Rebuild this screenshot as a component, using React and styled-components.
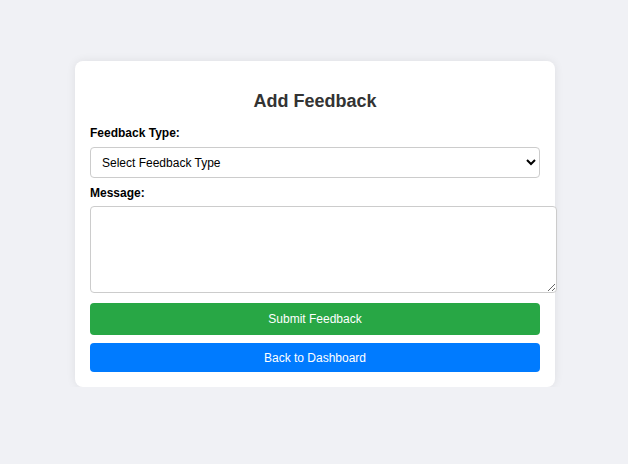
import React from "react";
import styled, { createGlobalStyle } from "styled-components";

const GlobalStyle = createGlobalStyle`
  body {
    margin: 0;
    background: #f0f1f5;
    font-family: "Liberation Sans", Arial, sans-serif;
  }
`;

const Page = styled.div`
  display: flex;
  justify-content: center;
  padding: 61px 0 0 2px;
`;

const Card = styled.div`
  width: 450px;
  padding: 15px;
  background: #fff;
  border-radius: 8px;
  box-shadow: 0 0 10px rgba(0, 0, 0, 0.08);
`;

const Title = styled.h2`
  margin: 15px 0 13px;
  text-align: center;
  font-size: 18px;
  line-height: 21px;
  color: #333;
`;

const Label = styled.label`
  display: block;
  font-size: 12px;
  font-weight: bold;
  line-height: 16px;
  color: #000;
  margin-bottom: ${(p) => p.$gap || 6}px;
`;

const Select = styled.select`
  display: block;
  width: 100%;
  height: 31px;
  padding: 0 7px;
  margin-bottom: 7px;
  font-family: inherit;
  font-size: 12px;
  color: #000;
  background: #fff;
  border: 1px solid #ccc;
  border-radius: 4px;
`;

/* the textarea overflows the card a little, as in the original form */
const TextArea = styled.textarea`
  display: block;
  box-sizing: border-box;
  width: 467px;
  height: 87px;
  padding: 8px;
  margin: 0 0 10px;
  font-family: inherit;
  font-size: 12px;
  border: 1px solid #ccc;
  border-radius: 4px;
`;

const Button = styled.button`
  display: block;
  width: 100%;
  height: ${(p) => p.$h}px;
  margin-bottom: ${(p) => p.$mb || 0}px;
  border: none;
  border-radius: 4px;
  background: ${(p) => p.$bg};
  color: #fff;
  font-family: inherit;
  font-size: 12px;
  cursor: pointer;
`;

export default function App() {
  return (
    <>
      <GlobalStyle />
      <Page>
        <Card>
          <Title>Add Feedback</Title>
          <Label htmlFor="type">Feedback Type:</Label>
          <Select id="type" defaultValue="">
            <option value="">Select Feedback Type</option>
            <option value="bug">Bug</option>
            <option value="feature">Feature Request</option>
            <option value="other">Other</option>
          </Select>
          <Label htmlFor="msg" $gap={5}>Message:</Label>
          <TextArea id="msg" />
          <Button $bg="#28a745" $h={32} $mb={8}>Submit Feedback</Button>
          <Button $bg="#007bff" $h={29}>Back to Dashboard</Button>
        </Card>
      </Page>
    </>
  );
}
